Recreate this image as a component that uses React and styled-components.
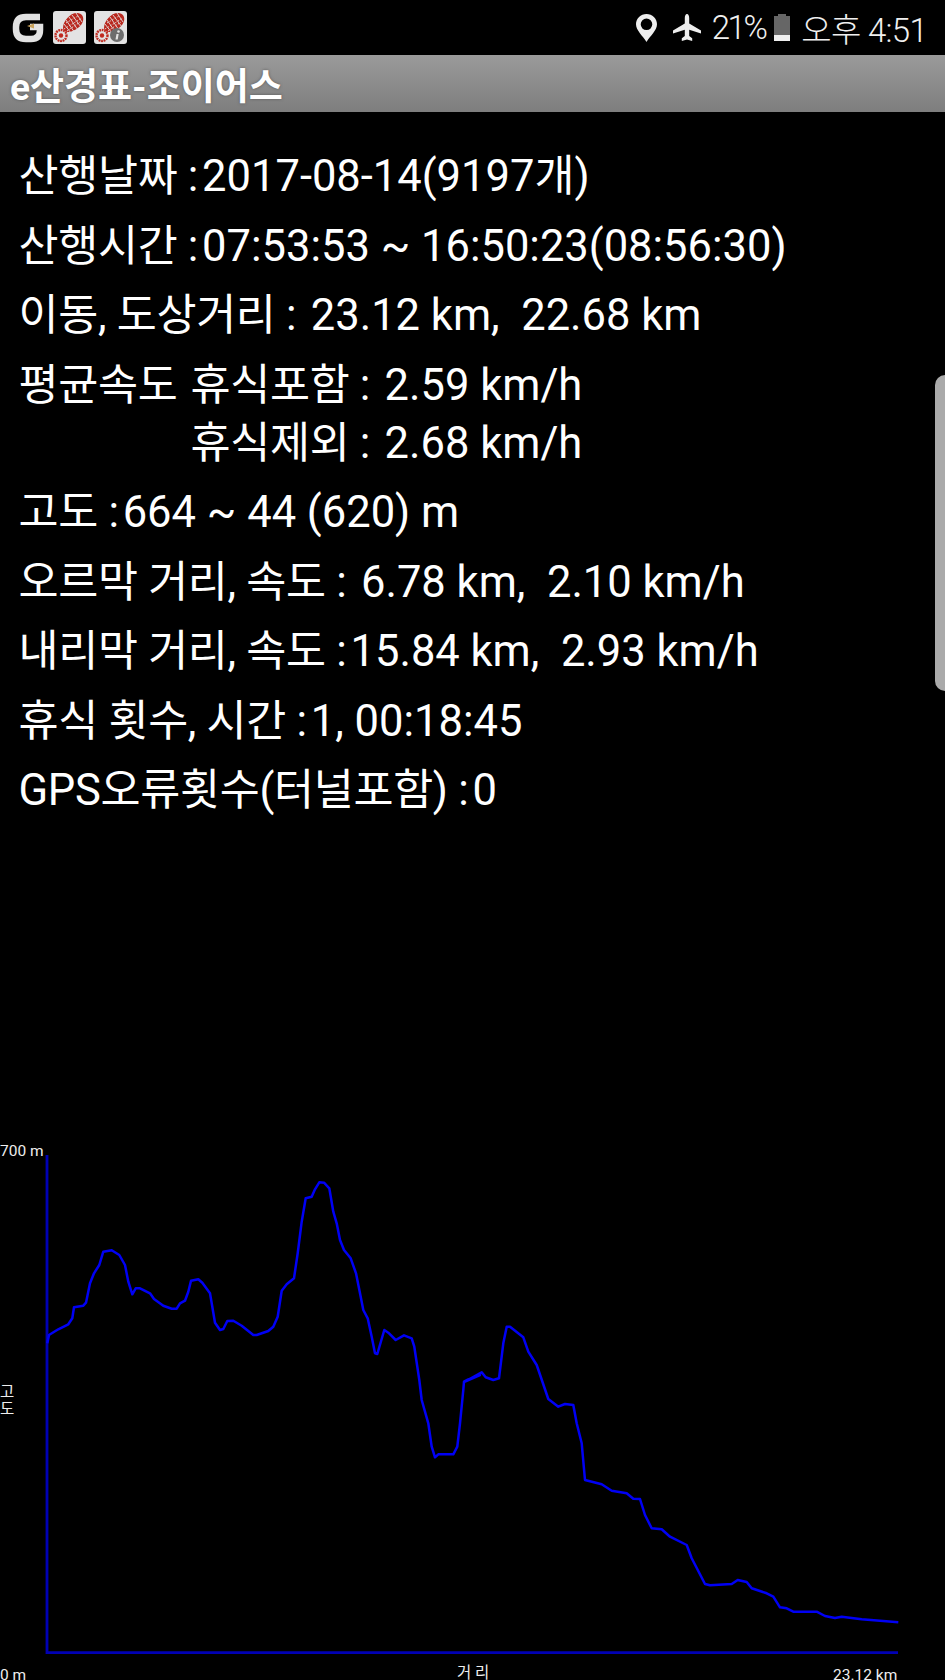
import React from "react";
import styled, { createGlobalStyle } from "styled-components";

const GlobalStyle = createGlobalStyle`
  html, body {
    margin: 0;
    padding: 0;
    background: #000;
  }
`;

const FONT = `Roboto, "Noto Sans CJK KR", sans-serif`;

const Screen = styled.div`
  position: relative;
  width: 945px;
  height: 1680px;
  overflow: hidden;
  background: #000;
  color: #fff;
  font-family: ${FONT};
`;

const StatusBar = styled.div`
  height: 55px;
  display: flex;
  align-items: center;
  justify-content: space-between;
  padding: 0 18px 0 12px;
  box-sizing: border-box;
`;

const NotifyIcons = styled.div`
  display: flex;
  align-items: center;
  gap: 8px;
`;

const SystemIcons = styled.div`
  display: flex;
  align-items: center;
  font-size: 33px;
  font-weight: 300;
  color: #f0f0f0;
`;

const Percent = styled.span`
  margin-left: 11px;
  letter-spacing: -2.5px;
`;

const Clock = styled.span`
  margin-left: 10px;
  letter-spacing: -0.7px;
`;

const TitleBar = styled.div`
  height: 57px;
  display: flex;
  align-items: center;
  padding-left: 10px;
  background: linear-gradient(#9a9a9a, #7e7e7e);
  font-size: 37px;
  font-weight: 700;
  text-shadow: 0 0 3px #555;
`;

const Stats = styled.div`
  padding: 36px 0 0 18.5px;
  font-size: 43.5px;
  line-height: 58px;
`;

const Row = styled.div`
  margin-bottom: 11.5px;
  white-space: pre;
`;

const Label = styled.span`
  margin-right: 4px;
  letter-spacing: -0.3px;
`;

const SpeedGrid = styled.div`
  display: grid;
  grid-template-columns: 172px auto;
  justify-content: start;
  margin-bottom: 11.5px;
  white-space: pre;
`;

const ScrollHandle = styled.div`
  position: absolute;
  right: 0;
  top: 375px;
  width: 10px;
  height: 316px;
  background: #aaa;
  border-radius: 12px 0 0 12px;
`;

const ChartArea = styled.svg`
  position: absolute;
  left: 0;
  top: 1130px;
  display: block;
`;

const ChartLabel = styled.text`
  fill: #eee;
  font-family: ${FONT};
  font-size: 15.5px;
`;

// 확대 캡처에서 읽은 좌표 (3배율), 구간마다 원점이 다르다
const traceA = [[142,640],[147,615],[175,598],[205,583],[217,565],[222,532],[250,527],[258,518],[270,460],[282,430],[298,405],[310,365],[335,361],[358,375],[375,405],[385,455],[397,493],[407,475],[420,475],[450,490],[462,507],[490,527],[515,536],[530,536],[540,520],[555,512],[565,485],[573,452],[595,448],[607,458],[630,490],[637,530],[645,578],[660,600],[670,597],[682,573],[700,572],[725,587],[745,603],[760,615],[770,615],[805,603],[820,590],[833,560],[845,482],[860,463],[882,445],[893,370],[905,275],[917,205],[935,200],[945,178],[958,157],[972,158],[988,175],[1000,245],[1010,280],[1020,330],[1032,360],[1052,385],[1068,430],[1080,490],[1090,540],[1103,565],[1115,620],[1125,670],[1132,672],[1153,600],[1165,608],[1187,630],[1212,616],[1235,625],[1243,650],[1258,750]];
const traceB = [[1265,60],[1285,130],[1295,200],[1305,232],[1315,223],[1360,223],[1372,200],[1380,130],[1390,30]];
const traceC = [[1392,755],[1405,748],[1440,735]];
const traceD = [[0,305],[50,277],[62,292],[85,300],[102,295],[115,190],[125,140],[135,140],[175,172],[190,215],[215,255],[250,357],[280,380],[300,372],[325,375],[335,430],[350,490],[360,600],[410,613],[440,632],[485,640],[505,656],[525,657],[540,705],[560,745],[590,748],[615,770],[665,795],[680,835],[720,912],[735,916],[800,912],[818,900],[845,906],[860,925],[905,940],[925,950],[945,982],[965,985],[985,995],[1055,995],[1080,1008],[1110,1014],[1130,1010],[1190,1018],[1300,1027]];

const toPoints = (list, ox, oy) =>
  list.map(([x, y]) => `${(ox + x / 3).toFixed(1)},${(oy + y / 3 - 1130).toFixed(1)}`);

const tracePoints = [
  ...toPoints(traceA, 0, 1130),
  ...toPoints(traceB, 0, 1380),
  ...toPoints(traceC, 0, 1130),
  ...toPoints(traceD, 465, 1280),
].join(" ");

const GIcon = () => (
  <svg width="33" height="32" viewBox="0 0 33 32">
    <path d="M28 5H14Q4 5 4 15V17Q4 27 14 27H19Q28 27 28 18V15H18" fill="none" stroke="#e2e2e2" strokeWidth="6.500" />
    <path d="M15 14l7-2.500v5z" fill="#c9a25a" />
  </svg>
);

const BootIcon = ({ info }) => (
  <svg width="33" height="33" viewBox="0 0 33 33">
    <rect width="33" height="33" rx="3" fill="#e3e3e3" />
    <path d="M10 17C10 10 17 2 24 2c5 0 7 4 6 8-1 5-8 10-14 11-3 .5-6-1-6-4z" fill="#b9281e" />
    <path d="M13 9l9 13M16 6l9 13M19 4l9 12M23 2l6 9M11 13l7 9" stroke="#e3e3e3" strokeWidth="0.900" />
    <path d="M11 18l18-11M14 20l13-9M13 12l12-7" stroke="#e3e3e3" strokeWidth="0.900" strokeDasharray="1.500 1.500" />
    <circle cx="8" cy="24.500" r="5.500" fill="none" stroke="#c02a20" strokeWidth="2.400" strokeDasharray="1.800 0.700" />
    <circle cx="8" cy="24.500" r="2.200" fill="#c02a20" />
    {info && (
      <>
        <circle cx="23" cy="24" r="7" fill="#6d6d6d" />
        <path d="M22.500 23h2.200l-1 5.500h-2.200z" fill="#e3e3e3" />
        <circle cx="24.500" cy="20.500" r="1.300" fill="#e3e3e3" />
      </>
    )}
  </svg>
);

const PinIcon = () => (
  <svg width="21" height="28" viewBox="0 0 21 28">
    <path fillRule="evenodd" d="M10.500 0C4.700 0 0 4.600 0 10.300 0 16.500 6.500 21.500 10.500 28c4-6.500 10.500-11.500 10.500-17.700C21 4.600 16.300 0 10.500 0zm0 4.500a5.800 5.800 0 1 1 0 11.600 5.800 5.800 0 0 1 0-11.600z" fill="#eee" />
  </svg>
);

const PlaneIcon = () => (
  <svg width="28" height="27" viewBox="0 0 28 27" style={{ marginLeft: 16 }}>
    <path d="M14 0c1.400 0 2.200 2 2.200 4v5.500L28 16.500v3l-11.800-3.700V22l3 2.300V27L14 25.500 8.800 27v-2.700l3-2.300v-6.200L0 19.500v-3l11.800-7V4c0-2 .8-4 2.200-4z" fill="#eee" />
  </svg>
);

const BatteryIcon = () => (
  <svg width="18" height="27" viewBox="0 0 18 27" style={{ marginLeft: 8 }}>
    <rect x="5" y="0" width="8" height="2" fill="#666" />
    <rect x="1" y="2" width="16" height="19" fill="#666" />
    <rect x="1" y="21" width="16" height="6" fill="#eee" />
  </svg>
);

export default function App() {
  return (
    <Screen>
      <GlobalStyle />
      <StatusBar>
        <NotifyIcons>
          <GIcon />
          <BootIcon />
          <BootIcon info />
        </NotifyIcons>
        <SystemIcons>
          <PinIcon />
          <PlaneIcon />
          <Percent>21%</Percent>
          <BatteryIcon />
          <Clock>오후 4:51</Clock>
        </SystemIcons>
      </StatusBar>
      <TitleBar>e산경표-조이어스</TitleBar>
      <Stats>
        <Row><Label>산행날짜 :</Label>2017-08-14(9197개)</Row>
        <Row><Label>산행시간 :</Label>07:53:53 ~ 16:50:23(08:56:30)</Row>
        <Row><Label>이동, 도상거리 : </Label>23.12 km,  22.68 km</Row>
        <SpeedGrid>
          <Label>평균속도</Label>
          <span><Label>휴식포함 : </Label>2.59 km/h</span>
          <span />
          <span><Label>휴식제외 : </Label>2.68 km/h</span>
        </SpeedGrid>
        <Row><Label>고도 :</Label>664 ~ 44 (620) m</Row>
        <Row><Label>오르막 거리, 속도 : </Label>6.78 km,  2.10 km/h</Row>
        <Row><Label>내리막 거리, 속도 :</Label>15.84 km,  2.93 km/h</Row>
        <Row><Label>휴식 횟수, 시간 :</Label>1, 00:18:45</Row>
        <Row><Label>GPS오류횟수(터널포함) :</Label>0</Row>
      </Stats>
      <ScrollHandle />
      <ChartArea width="945" height="550" viewBox="0 0 945 550">
        <ChartLabel x="0" y="26">700 m</ChartLabel>
        <ChartLabel x="0" y="267">고</ChartLabel>
        <ChartLabel x="0" y="284">도</ChartLabel>
        <polyline points="47,25 47,522.700 898,522.700" fill="none" stroke="#0000b4" strokeWidth="2.800" />
        <polyline points={tracePoints} fill="none" stroke="#0000f4" strokeWidth="2.500" strokeLinejoin="round" />
        <ChartLabel x="0" y="550">0 m</ChartLabel>
        <ChartLabel x="457" y="548">거 리</ChartLabel>
        <ChartLabel x="833" y="550">23.12 km</ChartLabel>
      </ChartArea>
    </Screen>
  );
}
